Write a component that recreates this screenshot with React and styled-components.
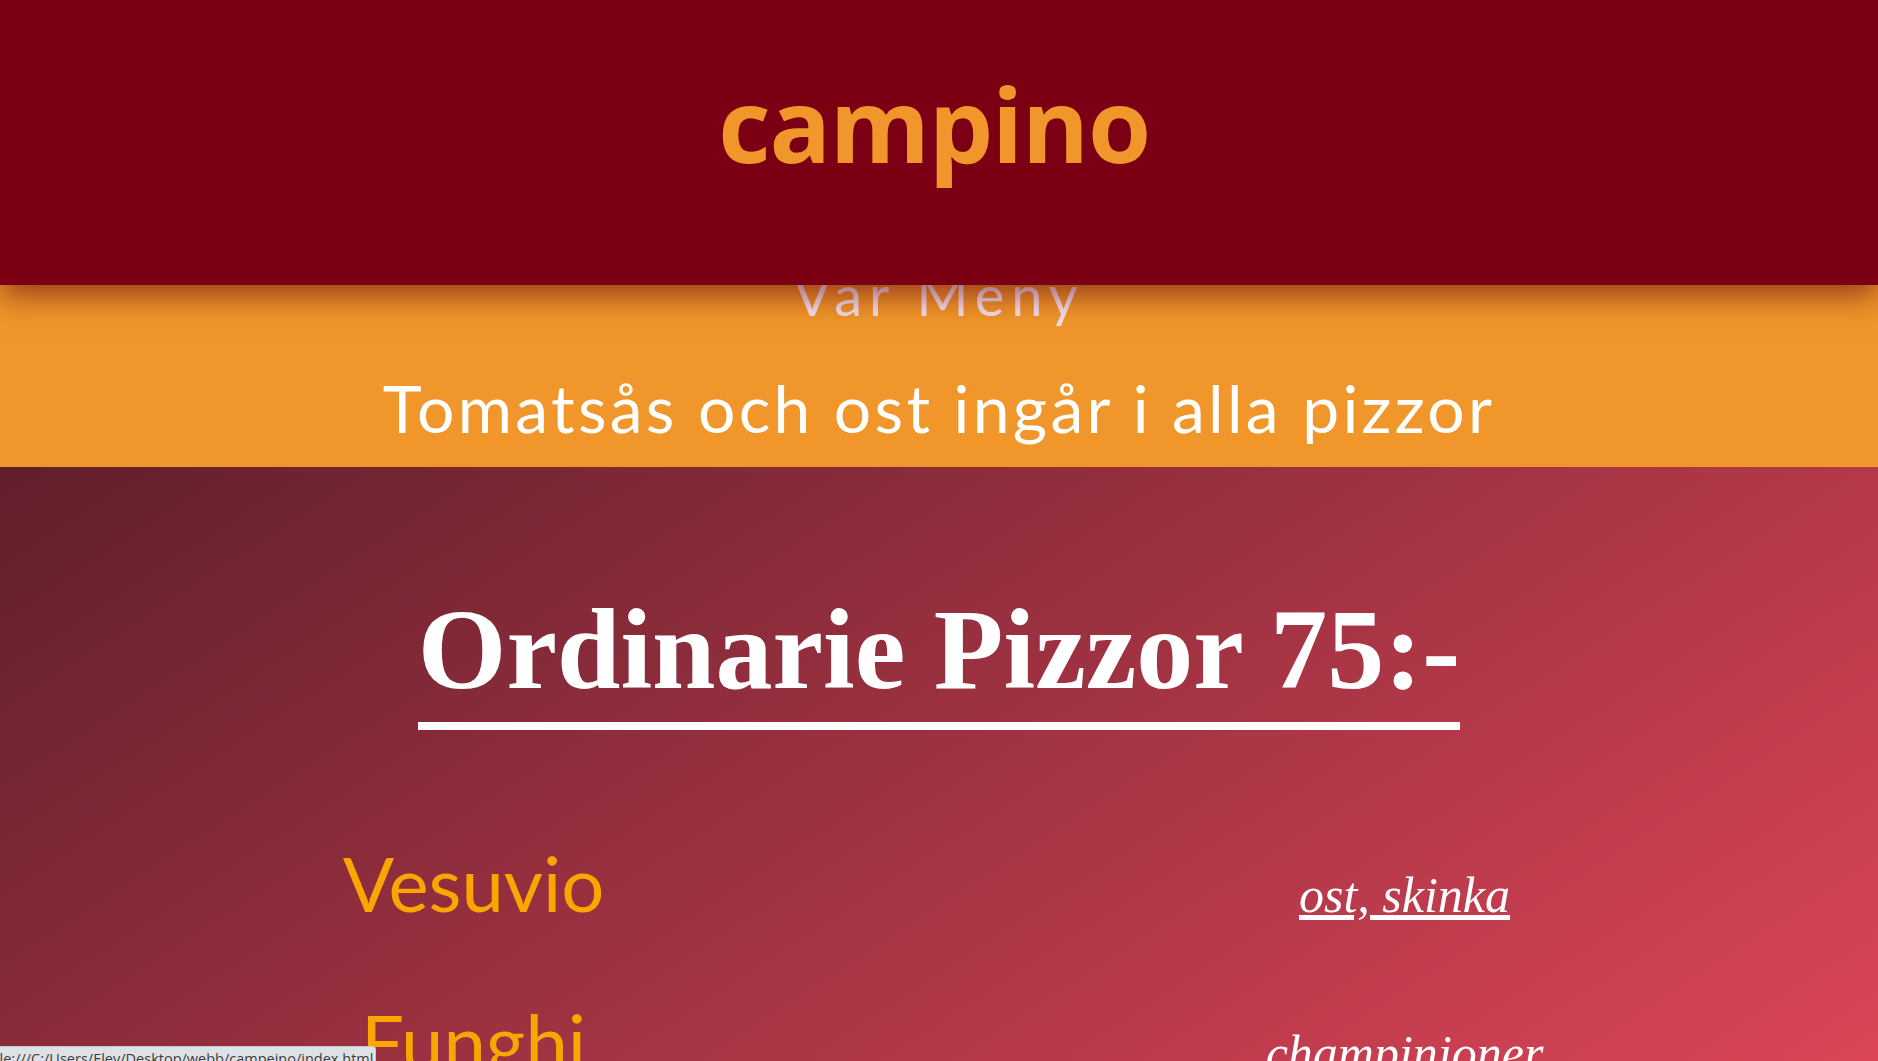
import React from 'react';
import styled, { createGlobalStyle } from 'styled-components';

const GlobalStyle = createGlobalStyle`
  html, body {
    margin: 0;
    padding: 0;
  }
  body {
    font-family: Lato, "Open Sans", sans-serif;
    background-color: #611f2b;
    overflow: hidden;
  }
`;

// Header
const Header = styled.header`
  position: fixed;
  top: 0;
  left: 0;
  right: 0;
  height: 285px;
  padding-bottom: 37px;
  box-sizing: border-box;
  display: flex;
  align-items: center;
  justify-content: center;
  background-color: #7b0013;
  box-shadow: 0 10px 30px rgba(90, 0, 15, 0.62);
  z-index: 10;
`;

const Logo = styled.h1`
  margin: 0 10px 0 0;
  font-family: "Open Sans", sans-serif;
  font-weight: 700;
  font-size: 102px;
  line-height: 1;
  letter-spacing: -1.2px;
  color: #f0962a;
`;

// Intro band
const Intro = styled.section`
  background-color: #f0962a;
  padding: 267px 0 26px 0;
  text-align: center;
`;

const MenuTitle = styled.h2`
  margin: 0;
  font-weight: 400;
  font-size: 56px;
  line-height: 1;
  letter-spacing: 7px;
  color: #f6e0ee;
`;

const Note = styled.p`
  margin: 52px 0 0 0;
  font-size: 66px;
  line-height: 1;
  letter-spacing: 3.3px;
  color: white;
`;

// Menu
const Menu = styled.section`
  padding: 126px 8px 200px 8px;
  text-align: center;
  background: linear-gradient(147deg, #611f2b 0px, #dc4558 1521px, #e8485c 2200px);
`;

const Category = styled.h2`
  display: inline-block;
  margin: 0;
  padding-bottom: 15px;
  border-bottom: 8px solid white;
  font-family: "Liberation Serif", serif;
  font-weight: 700;
  font-size: 114px;
  line-height: 1;
  color: white;
`;

const PizzaList = styled.div`
  display: grid;
  grid-template-columns: 1fr 1fr;
  row-gap: 82px;
  margin-top: 115px;
  align-items: baseline;
`;

const PizzaName = styled.div`
  font-size: 76px;
  line-height: 1;
  color: #f9a602;
`;

const Toppings = styled.div`
  font-family: "Liberation Serif", serif;
  font-style: italic;
  font-size: 50px;
  line-height: 1;
  color: white;
  text-decoration: underline;
`;

// Browser status bubble
const StatusBar = styled.div`
  position: fixed;
  left: 0;
  bottom: 0;
  width: 376px;
  height: 15px;
  box-sizing: border-box;
  overflow: hidden;
  white-space: nowrap;
  text-indent: -9px;
  background-color: #dee1e6;
  border: 1px solid #c4c7cc;
  border-left: none;
  border-bottom: none;
  border-top-right-radius: 4px;
  font-family: "Open Sans", sans-serif;
  font-size: 14.5px;
  line-height: 24px;
  color: #3c3c3c;
  z-index: 20;
`;

const pizzas = [
  { name: 'Vesuvio', toppings: 'ost, skinka' },
  { name: 'Funghi', toppings: 'champinjoner' },
  { name: 'Capricciosa', toppings: 'skinka, champinjoner' },
  { name: 'Hawaii', toppings: 'skinka, ananas' },
];

const App = () => (
  <>
    <GlobalStyle />
    <Header>
      <Logo>campino</Logo>
    </Header>
    <Intro>
      <MenuTitle>Var Meny</MenuTitle>
      <Note>Tomatsås och ost ingår i alla pizzor</Note>
    </Intro>
    <Menu>
      <Category>Ordinarie Pizzor 75:-</Category>
      <PizzaList>
        {pizzas.map(({ name, toppings }) => (
          <React.Fragment key={name}>
            <PizzaName>{name}</PizzaName>
            <Toppings>{toppings}</Toppings>
          </React.Fragment>
        ))}
      </PizzaList>
    </Menu>
    <StatusBar>file:///C:/Users/Elev/Desktop/webb/campeino/index.html</StatusBar>
  </>
);

export default App;
